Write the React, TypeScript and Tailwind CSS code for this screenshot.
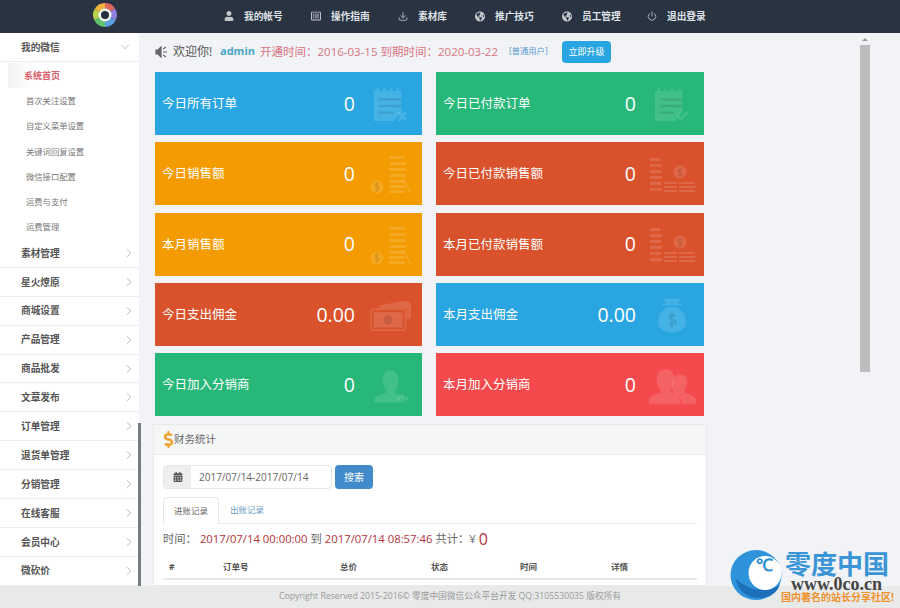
import { ChevronDown, ChevronRight, Download, Power } from "lucide-react";
import { FaCalendarAlt, FaDollarSign, FaGlobeAmericas, FaRegListAlt, FaUser } from "react-icons/fa";
import type { ReactNode } from "react";

const font = "font-['Open_Sans','Noto_Sans_CJK_SC',sans-serif]";

const navItems = [
  { icon: <FaUser size={10} />, label: "我的帐号", w: "w-[87px]" },
  { icon: <FaRegListAlt size={10} />, label: "操作指南", w: "w-[87px]" },
  { icon: <Download size={11} />, label: "素材库", w: "w-[77px]" },
  { icon: <FaGlobeAmericas size={11} />, label: "推广技巧", w: "w-[87px]" },
  { icon: <FaGlobeAmericas size={11} />, label: "员工管理", w: "w-[85px]" },
  { icon: <Power size={10} />, label: "退出登录", w: "w-[70px]" },
];

const subItems = ["首次关注设置", "自定义菜单设置", "关键词回复设置", "微信接口配置", "运费与支付", "运费管理"];
const menuItems = ["素材管理", "星火燎原", "商城设置", "产品管理", "商品批发", "文章发布", "订单管理", "退货单管理", "分销管理", "在线客服", "会员中心", "微砍价"];

function NoteIcon({ check }: { check?: boolean }) {
  return (
    <svg width="36" height="36" viewBox="0 0 38 38" fill="currentColor">
      <path d="M1 4h3V1h2v3h5V1h2v3h5V1h2v3h5V1h2v3h3v22l-8 10H1z" />
      <g fill="none" stroke="#000" strokeOpacity="0.1" strokeWidth="2.5">
        <path d="M6 13h24M6 20h24M6 27h16" />
      </g>
      {check ? (
        <path d="M25 31l3 3 7-7" fill="none" stroke="currentColor" strokeWidth="3" />
      ) : (
        <path d="M27 27l8 8M35 27l-8 8" fill="none" stroke="currentColor" strokeWidth="3" />
      )}
    </svg>
  );
}

function CoinsIcon() {
  return (
    <svg width="42" height="38" viewBox="0 0 42 38" fill="currentColor">
      <circle cx="7" cy="31" r="6.5" />
      <path d="M9 28c-1-1-4-1-4 1 0 2 4 1 4 3 0 2-3 2-4 1M7 26v10" fill="none" stroke="#000" strokeOpacity="0.12" strokeWidth="1.2" />
      <path d="M19 0h16v3H19zM20 6h16v3H20zM19 12h17v3H19zM20 18h16v3H20zM19 24h15v3H19zM19 29h16v3H19zM19 34h16v3H19z" />
      <path d="M34 23l8 14h-2l-8-14z" />
    </svg>
  );
}

function StacksIcon() {
  return (
    <svg width="47" height="35" viewBox="0 0 47 35" fill="currentColor">
      <path d="M1 0h10v3H1zM1 6h12v3H1zM1 12h11v3H1zM1 18h12v3H1zM1 24h11v3H1zM1 30h12v3H1z" />
      <circle cx="31" cy="14" r="6.5" />
      <path d="M33 12c-1-1-4-1-4 1 0 2 4 1 4 3 0 2-3 2-4 1M31 9v10" fill="none" stroke="#000" strokeOpacity="0.12" strokeWidth="1.2" />
      <path d="M15 24h13v2H15zM15 28h13v2H15zM15 32h13v2H15zM30 24h15l1 2H30zM30 28h17v2H30zM30 32h16v2H30z" />
    </svg>
  );
}

function CashIcon() {
  return (
    <svg width="42" height="32" viewBox="0 0 44 32" fill="currentColor">
      <path d="M10 5l26-5 7 2v16l-5 1V8L10 8z" />
      <rect x="1" y="9" width="36" height="22" rx="2" fill="none" stroke="currentColor" strokeWidth="1.5" />
      <rect x="4" y="12" width="30" height="16" />
      <circle cx="19" cy="20" r="5" fill="#000" fillOpacity="0.1" />
    </svg>
  );
}

function BagIcon() {
  return (
    <svg width="28" height="35" viewBox="0 0 30 36" fill="currentColor">
      <path d="M6 0h18l-4 5h5v2H5V5h5zM10 9h10c6 3 10 10 10 16 0 7-5 11-15 11S0 32 0 25C0 19 4 12 10 9z" />
      <path d="M19 19c-1-2-7-2-7 1 0 3 7 2 7 5 0 3-6 3-8 1M15 15v16" fill="none" stroke="#000" strokeOpacity="0.12" strokeWidth="1.8" />
    </svg>
  );
}

function UserAddIcon() {
  return (
    <svg width="34" height="33" viewBox="0 0 36 34" fill="currentColor">
      <path d="M18 0c5 0 8 4 8 10 0 5-2 9-4 11v3c4 1 7 2 9 4v1h-3v3h1v2H0v-3c0-4 8-6 13-7v-3c-2-2-4-6-4-11C9 4 13 0 18 0z" />
      <path d="M29 25h3v3h4v3h-4v3h-3v-3h-4v-3h4z" />
    </svg>
  );
}

function UsersIcon() {
  return (
    <svg width="47" height="35" viewBox="0 0 48 35" fill="currentColor">
      <path d="M32 5c5 0 7 4 7 8 0 4-2 7-3 9v2c5 1 12 4 12 8v3H34c0-4-3-7-9-10v-1c-1-3-2-5-1-11 1-5 4-8 8-8z" />
      <path d="M17 0c6 0 9 5 9 10 0 5-2 9-4 11v3c5 1 10 4 10 8v3H0v-3c0-4 7-7 12-8v-3c-2-2-4-6-4-11C8 5 11 0 17 0z" />
    </svg>
  );
}

function StatCard({ label, value, color, icon }: { label: string; value: string; color: string; icon: ReactNode }) {
  return (
    <div className={`${color} flex h-[63px] items-center pl-[7px] text-white`}>
      <span className="w-[125px] whitespace-nowrap pt-[2px] text-[12.5px]">{label}</span>
      <span className="w-[68px] text-right text-[19.5px] leading-none">{value}</span>
      <span className="ml-[10px] mt-[3px] flex w-[52px] justify-center text-white/[.13]">{icon}</span>
    </div>
  );
}

export default function App() {
  return (
    <div className={`${font} relative flex h-[608px] w-[900px] flex-col overflow-hidden bg-[#f1f3f6] text-[#555]`}>
      {/* Top bar */}
      <header className="flex h-[33px] shrink-0 items-center bg-[#2a3341]">
        <div className="flex h-full w-[224px] justify-center pr-[13px] pt-[3px]">
          <svg width="24" height="24" viewBox="0 0 24 24" className="ml-[-2px]">
            <path d="M12 0a12 12 0 0 1 10 5.4L12 12z" fill="#e0685c" />
            <path d="M22 5.4A12 12 0 0 1 22.8 17L12 12z" fill="#8f7fd8" />
            <path d="M22.8 17A12 12 0 0 1 12 24V12z" fill="#5d9fe0" />
            <path d="M12 24A12 12 0 0 1 1.2 17L12 12z" fill="#62c26d" />
            <path d="M1.2 17A12 12 0 0 1 1.6 6L12 12z" fill="#b9d24e" />
            <path d="M1.6 6A12 12 0 0 1 12 0v12z" fill="#f2b440" />
            <circle cx="12" cy="12" r="6.5" fill="#f4f6f6" />
            <circle cx="12" cy="12" r="4" fill="#24303c" />
          </svg>
        </div>
        <nav className="flex text-[#dfe3e8]">
          {navItems.map((item) => (
            <div key={item.label} className={`${item.w} flex items-center gap-[10px]`}>
              <span className="flex w-[10px] justify-center text-[#c2c7cc]">{item.icon}</span>
              <span className="whitespace-nowrap pt-[2px] text-[9.7px] font-bold">{item.label}</span>
            </div>
          ))}
        </nav>
      </header>

      <div className="flex min-h-0 flex-1">
        {/* Sidebar */}
        <aside className="w-[139px] shrink-0 overflow-hidden bg-white">
          <div className="flex h-[29px] items-center justify-between border-b border-[#eee] pl-[21px] pr-[7px] text-[9.7px] font-bold">
            <span className="pt-[2px]">我的微信</span>
            <ChevronDown size={14} strokeWidth={1} className="text-[#888]" />
          </div>
          <div className="h-[177px] pt-[1px]">
            <div className="ml-[8px] flex h-[25px] items-center bg-gradient-to-r from-[#f1f1f1] to-white to-20% pl-[16px] pt-[1px] text-[9px] font-bold text-[#d9606a]">
              系统首页
            </div>
            {subItems.map((label) => (
              <div key={label} className="flex h-[25.3px] items-center pl-[26px] pt-[1px] text-[8.3px] text-[#777]">
                {label}
              </div>
            ))}
          </div>
          {menuItems.map((label) => (
            <div key={label} className="flex h-[28.9px] items-center justify-between border-b border-[#eee] pl-[21px] pr-[3px] text-[9.7px] font-bold">
              <span className="pt-[2px]">{label}</span>
              <ChevronRight size={14} strokeWidth={1} className="text-[#888]" />
            </div>
          ))}
        </aside>

        {/* Main */}
        <main className="min-w-0 flex-1 pl-[14px]">
          <div className="flex h-[39px] items-center pb-[2px] pl-[2px] text-[11px]">
            <svg width="12" height="14" viewBox="0 0 12 14" className="text-[#666]" fill="none" stroke="currentColor" strokeWidth="1.2">
              <path d="M1 5v4h2l3 3V2L3 5z" fill="currentColor" />
              <path d="M8 4l3-2M8 7h4M8 10l3 2" />
            </svg>
            <span className="ml-[6px] w-[47px] text-[12px] text-[#555]">欢迎你!</span>
            <span className="w-[40px] font-bold text-[#4ba7c9]">admin</span>
            <span className="w-[249px] whitespace-nowrap text-[11.5px] text-[#d9737f]">开通时间：2016-03-15 到期时间：2020-03-22</span>
            <span className="w-[53px] whitespace-nowrap text-[8.3px] text-[#5b9bd0]">[普通用户]</span>
            <button className="flex h-[22px] w-[49px] items-center justify-center rounded-sm bg-[#29a6e1] text-[9px] text-white">立即升级</button>
          </div>

          <div className="ml-[2px] grid w-[549px] grid-cols-[267px_268px] gap-x-[14px] gap-y-[7.3px]">
            <StatCard label="今日所有订单" value="0" color="bg-[#29a6e1]" icon={<NoteIcon />} />
            <StatCard label="今日已付款订单" value="0" color="bg-[#26b779]" icon={<NoteIcon check />} />
            <StatCard label="今日销售额" value="0" color="bg-[#f39b00]" icon={<CoinsIcon />} />
            <StatCard label="今日已付款销售额" value="0" color="bg-[#d9522b]" icon={<StacksIcon />} />
            <StatCard label="本月销售额" value="0" color="bg-[#f39b00]" icon={<CoinsIcon />} />
            <StatCard label="本月已付款销售额" value="0" color="bg-[#d9522b]" icon={<StacksIcon />} />
            <StatCard label="今日支出佣金" value="0.00" color="bg-[#d9522b]" icon={<CashIcon />} />
            <StatCard label="本月支出佣金" value="0.00" color="bg-[#29a6e1]" icon={<BagIcon />} />
            <StatCard label="今日加入分销商" value="0" color="bg-[#26b779]" icon={<UserAddIcon />} />
            <StatCard label="本月加入分销商" value="0" color="bg-[#f44a4d]" icon={<UsersIcon />} />
          </div>

          {/* Finance panel */}
          <section className="mt-[8px] h-[162px] w-[554px] overflow-hidden border border-[#e7e9ec] bg-white">
            <div className="flex h-[30px] items-center border-b border-[#e7e9ec] bg-[#f5f6f6] pl-[6px] text-[10.5px] text-[#666]">
              <FaDollarSign size={17} className="text-[#eea236]" />
              <span className="ml-[-3px]">财务统计</span>
            </div>
            <div className="px-[9px] pt-[10px]">
              <div className="flex items-center">
                <div className="flex h-[24px] w-[169px] rounded-sm border border-[#e5e6e7] text-[10px]">
                  <span className="flex w-[27px] items-center justify-center bg-[#eee] text-[#555]">
                    <FaCalendarAlt size={10} />
                  </span>
                  <span className="flex items-center pl-[8px] text-[#666]">2017/07/14-2017/07/14</span>
                </div>
                <button className="ml-[3px] flex h-[24px] w-[38px] items-center justify-center rounded-sm bg-[#428bca] text-[10px] text-white">搜索</button>
              </div>
              <div className="mt-[8px] flex h-[27px] w-[534px] border-b border-[#e5e6e7] text-[8.5px]">
                <span className="flex h-[27px] w-[56px] items-center justify-center rounded-t-sm border border-b-0 border-[#e5e6e7] bg-white text-[#666]">进账记录</span>
                <span className="flex w-[56px] items-center justify-center text-[#6a9bc3]">出账记录</span>
              </div>
              <p className="mt-[5px] flex h-[20px] items-center whitespace-nowrap text-[11.3px] text-[#666]">
                时间：
                <span className="ml-[3px] text-[#b5323c]">2017/07/14 00:00:00</span>
                <span className="mx-[3px]">到</span>
                <span className="text-[#b5323c]">2017/07/14 08:57:46</span>
                <span className="ml-[3px]">共计：¥</span>
                <span className="ml-[3px] text-[16px] leading-none text-[#b5323c]">0</span>
              </p>
              <div className="mt-[7px] grid h-[24px] w-[534px] grid-cols-[54px_117px_91px_89px_91px_92px] items-center border-b-2 border-[#e5e6e7] pl-[6px] text-[8.5px] font-bold text-[#555]">
                <span>#</span>
                <span>订单号</span>
                <span>总价</span>
                <span>状态</span>
                <span>时间</span>
                <span>详情</span>
              </div>
            </div>
          </section>
        </main>
      </div>

      <footer className="flex h-[22px] shrink-0 items-center justify-center bg-[#e8e9e9] text-[8.7px] text-[#999]">
        Copyright Reserved 2015-2016© 零度中国微信公众平台开发 QQ:3105530035 版权所有
      </footer>

      {/* Scrollbars */}
      <div className="absolute left-[138px] top-[423px] h-[163px] w-[3px] bg-[#777c82]" />
      <div className="absolute left-[860px] top-[45px] h-[327px] w-[10px] bg-[#bdbdbd]" />
      <div className="absolute left-[862px] top-[38px] h-0 w-0 border-x-[3px] border-b-[3px] border-x-transparent border-b-[#999]" />

      {/* Watermark */}
      <div className="absolute left-[728px] top-[548px] h-[56px] w-[172px]">
        <svg width="54" height="52" viewBox="0 0 54 52" className="absolute left-[2px] top-[1px]">
          <ellipse cx="26" cy="26" rx="25.5" ry="25" fill="#2f93dc" />
          <path d="M6 30c2 14 14 19 24 19 10 0 18-6 20-14-6 8-28 10-44-5z" fill="#1c6fb8" />
          <ellipse cx="35" cy="24" rx="16.5" ry="17" fill="#ffffff" />
        </svg>
        <span className="absolute left-[28px] top-[9px] font-['Liberation_Serif',serif] text-[17px] font-bold leading-none text-[#2a8fd8]">℃</span>
        <span className="absolute left-[57px] top-[3px] whitespace-nowrap text-[26px] font-bold leading-[26px] text-[#3a95d6]">零度中国</span>
        <span className="absolute left-[63px] top-[29px] whitespace-nowrap font-['Liberation_Serif',serif] text-[18px] font-bold leading-[14px] text-[#444]">www.0co.cn</span>
        <span className="absolute left-[53px] top-[43px] whitespace-nowrap text-[10px] font-bold leading-[12px] text-[#f0902a]">国内著名的站长分享社区!</span>
      </div>
    </div>
  );
}
